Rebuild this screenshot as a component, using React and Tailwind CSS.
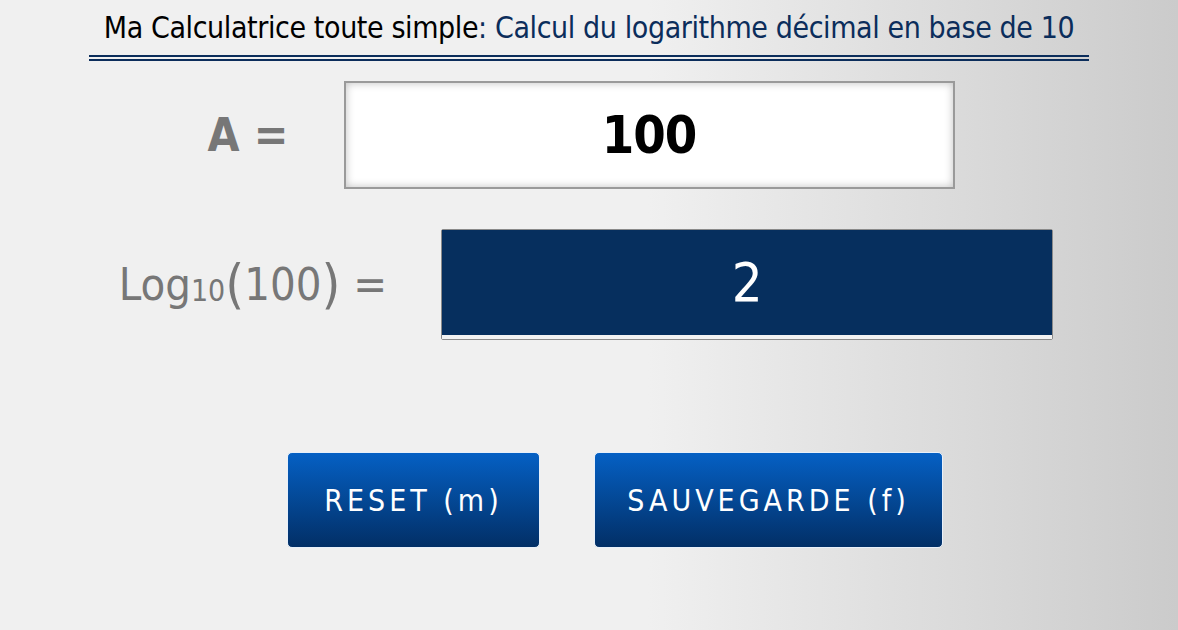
import React from "react";

const font = "font-['DejaVu_Sans',sans-serif] font-stretch-condensed";

const App = () => {
    return (
        <div className={`min-h-screen w-full bg-[linear-gradient(to_right,#f0f0f0_0%,#f0f0f0_55%,#cbcbcb_100%)] ${font}`}>
            <div className="w-[1000px] mx-auto pt-[9px]">
                <h1 className="text-center text-[30px] leading-[38px] text-black whitespace-nowrap tracking-[-0.4px]">
                    Ma Calculatrice toute simple<span className="text-[#0b2d5b]">: Calcul du logarithme décimal en base de 10</span>
                </h1>
                <div className="mt-[8px] h-[2px] bg-[#0b2d5b]"></div>
                <div className="mt-[2px] h-[2px] bg-[#0b2d5b]"></div>
            </div>

            <div className="flex items-center justify-center gap-[55px] mt-[20px] pr-[16px]">
                <span className="text-[46px] font-bold text-[#777777] whitespace-nowrap">A =</span>
                <div className="w-[611px] h-[108px] border-2 border-[#9a9a9a] bg-white shadow-[inset_0_0_8px_rgba(0,0,0,0.25)] flex items-center justify-center">
                    <span className="text-[52px] font-bold text-black tracking-[-1px]">100</span>
                </div>
            </div>

            <div className="flex items-center justify-center gap-[54px] mt-[40px] pr-[6px]">
                <span className="text-[45px] text-[#777777] flex items-center whitespace-nowrap">
                    Log<sub className="text-[30px] relative top-[6px]">10</sub><span className="text-[54px] leading-none">(</span>100<span className="text-[54px] leading-none">)</span>&nbsp;=
                </span>
                <div className="w-[612px] h-[111px] border border-[#8a8a8a] rounded-[2px]">
                    <div className="h-full bg-[#062f5e] border-b-[4px] border-[#f2f2f2] flex items-center justify-center">
                        <span className="text-[54px] text-white">2</span>
                    </div>
                </div>
            </div>

            <div className="flex justify-center gap-[54px] mt-[112px] pl-[52px]">
                <button className="w-[253px] h-[96px] rounded-[5px] border border-[#e8f0fa] bg-[linear-gradient(to_bottom,#0560c4,#022f66)] text-white text-[30px] tracking-[4px] whitespace-nowrap">
                    RESET (m)
                </button>
                <button className="w-[349px] h-[96px] rounded-[5px] border border-[#e8f0fa] bg-[linear-gradient(to_bottom,#0560c4,#022f66)] text-white text-[30px] tracking-[4px] whitespace-nowrap">
                    SAUVEGARDE (f)
                </button>
            </div>
        </div>
    );
};

export default App;
